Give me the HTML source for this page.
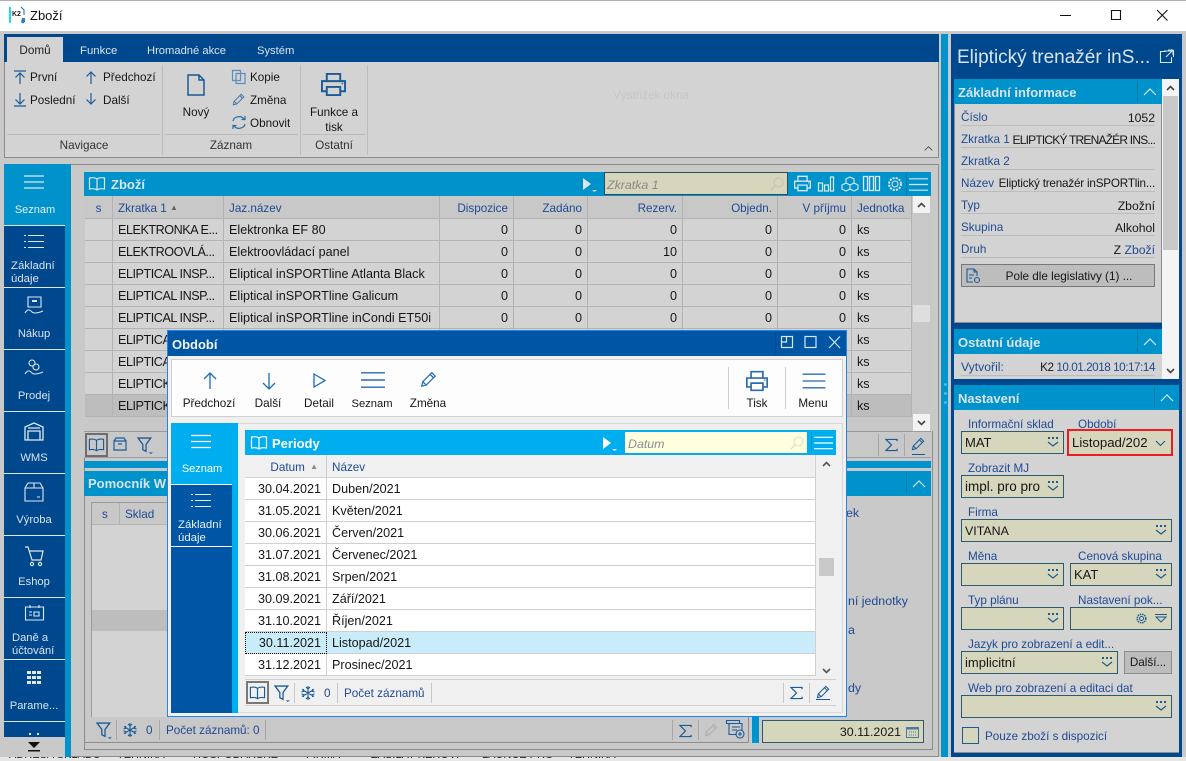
<!DOCTYPE html>
<html><head><meta charset="utf-8"><title>Zboží</title>
<style>
html,body{margin:0;padding:0}
body{width:1186px;height:761px;overflow:hidden;position:relative;background:#c9c9c9;font:11.7px/16px "Liberation Sans",sans-serif;color:#161616}
.a{position:absolute;box-sizing:border-box}
.t{position:absolute;white-space:nowrap;line-height:16px;margin-top:1px}
.m0{margin-top:0}
.c{transform:translateX(-50%)}
.r{transform:translateX(-100%)}
.l{color:#1f4a94}
.s{color:#d9e3ec}
.v{font-size:12.2px}
.b{font-weight:bold;font-size:13px;margin-top:0}
svg{position:absolute;overflow:visible;fill:none}
table{position:absolute;border-collapse:separate;border-spacing:0;table-layout:fixed}
td,th{box-sizing:border-box;height:22px;font-weight:normal;text-align:left;white-space:nowrap;overflow:hidden;border-right:1px solid #b3b3b3;border-bottom:1px solid #b3b3b3}
td{font-size:12.6px;padding:1px 5px 0;line-height:20px}
th{font-size:11.7px;padding:3px 5px 0;line-height:18px}
.n{text-align:right}
.k{letter-spacing:-.45px}
#g th{color:#1f4a94;background:#c8c8c8}
#g td{background:#d3d3d3}
#g tr.sel td{background:#bdbdbd}
#p td,#p th{border-color:#d0d0d0}
#p th{color:#1f4a94;background:#f0f0f0}
#p td{background:#fff}
#p tr.sel td{background:#c9ecfa}
.f{position:absolute;box-sizing:border-box;height:23px;background:#d6d6bc;border:1px solid #2c5a6e;padding-left:3px;line-height:22px;white-space:nowrap;overflow:hidden;font-size:13px}
.u{position:absolute;height:1px;background:#bcbcbc;left:961px;width:194px}
</style></head><body>
<svg width="0" height="0" style="position:absolute">
<defs>
<symbol id="menu" viewBox="0 0 20 14"><path d="M0 1h20M0 7h20M0 13h20" stroke="currentColor" stroke-width="1.2"/></symbol>
<symbol id="book" viewBox="0 0 18 16"><path d="M9 3C7 1.500 4 1.500 1.500 2v11C4 12.500 7 12.500 9 14c2-1.500 5-1.500 7.500-1V2C14 1.500 11 1.500 9 3zM9 3v11" stroke="currentColor" stroke-width="1.200"/></symbol>
<symbol id="filter" viewBox="0 0 16 16"><path d="M1 1h12L8.500 7v6.500l-3-1.500V7z" stroke="currentColor" stroke-width="1.200"/><path d="M11 14.500h4l-2 1.500z" fill="currentColor"/></symbol>
<symbol id="snow" viewBox="0 0 16 16"><path d="M8 1v14M2 4.500l12 7M14 4.500l-12 7M6 2l2 2 2-2M6 14l2-2 2 2M1.500 7l2.500-.7-.7-2.300M14.500 9l-2.500.7.7 2.300M14.500 7L12 6.300l.7-2.300M1.500 9L4 9.700l-.7 2.300" stroke="currentColor" stroke-width="1.100"/></symbol>
<symbol id="sigma" viewBox="0 0 14 14"><path d="M13 3V1H1l6 6-6 6h12v-2" stroke="currentColor" stroke-width="1.300"/></symbol>
<symbol id="pen" viewBox="0 0 16 16"><path d="M1.500 13.500l1-4L10.500 1.500l3 3-8 8zM9 3l3 3M2.500 9.500l3 3" stroke="currentColor" stroke-width="1.100"/></symbol>
<symbol id="print" viewBox="0 0 28 26"><path d="M7 9V2h14v7M7 20H2V9.500h24V20h-5M7 15.500h14V24H7z" stroke="currentColor" stroke-width="2"/><path d="M22.500 12h1.500" stroke="currentColor" stroke-width="1.500"/></symbol>
<symbol id="dd" viewBox="0 0 12 10"><path d="M1 5l5 4 5-4" stroke="#1c5a96" stroke-width="1.200"/><path d="M1 0h2v2H1zM5 0h2v2H5zM9 0h2v2H9z" fill="#1c5a96"/></symbol>
<symbol id="chev" viewBox="0 0 14 8"><path d="M1 7l6-6 6 6" stroke="currentColor" stroke-width="1.200"/></symbol>
<symbol id="play" viewBox="0 0 14 14"><path d="M0 0l8 6-8 6z" fill="currentColor"/><path d="M9 12h5l-2.500 2z" fill="currentColor"/></symbol>
<symbol id="mag" viewBox="0 0 14 14"><circle cx="8.500" cy="5.500" r="4.500" stroke="currentColor"/><path d="M5 9l-4 4" stroke="currentColor" stroke-width="1.300"/></symbol>
</defs></svg>

<!-- title bar -->
<div class="a" style="left:0;top:0;width:1186px;height:31px;background:#fff;border-top:1px solid #b0b0b0"></div>
<svg style="left:9px;top:7px" width="17" height="17"><path d="M1 0v16" stroke="#19e0f0" stroke-width="2"/><path d="M12 0l3 3v5" stroke="#2a7fc0" stroke-width="1.200"/><path d="M13 11h3v4l-2 1.500-2-1z" fill="#2a7fc0"/></svg>
<div class="t m0" style="left:12px;top:7px;font:bold 7px/16px 'Liberation Sans',sans-serif;color:#222">K2</div>
<div class="t m0" style="left:30px;top:8px;font-size:13px;color:#111">Zboží</div>
<svg style="left:1060px;top:9px" width="120" height="14"><path d="M0 6.500h11M51.500 1.500h9v9h-9zM97 1l10.500 10.500M107.500 1L97 11.500" stroke="#111" stroke-width="1.100"/></svg>

<!-- ribbon -->
<div class="a" style="left:4px;top:34px;width:935px;height:28px;background:#00488d"></div>
<div class="a" style="left:7px;top:37px;width:56px;height:25px;background:#d3d3d3"></div>
<div class="a" style="left:4px;top:62px;width:935px;height:96px;background:#d3d3d3;border:1px solid #8c8c8c;border-top:0"></div>
<div class="t c" style="left:35px;top:42px;color:#222">Domů</div>
<div class="t s" style="left:80px;top:42px;font-size:11.4px">Funkce</div>
<div class="t s" style="left:147px;top:42px;font-size:11.2px">Hromadné akce</div>
<div class="t s" style="left:257px;top:42px;font-size:11.2px">Systém</div>
<div class="a" style="left:162px;top:65px;width:1px;height:90px;background:#bcbcbc"></div>
<div class="a" style="left:300px;top:65px;width:1px;height:90px;background:#bcbcbc"></div>
<div class="a" style="left:367px;top:65px;width:1px;height:90px;background:#bcbcbc"></div>
<div class="a" style="left:7px;top:134px;width:153px;height:1px;background:#bcbcbc"></div>
<div class="a" style="left:165px;top:134px;width:133px;height:1px;background:#bcbcbc"></div>
<div class="a" style="left:303px;top:134px;width:62px;height:1px;background:#bcbcbc"></div>
<svg style="left:13px;top:70px" width="90" height="38" stroke="#1c5a96" stroke-width="1.200"><path d="M1 1h12M7 3v11M2.500 7.500L7 3l4.500 4.500"/><path d="M1 36h12M7 23v11M2.500 29.500L7 34l4.500-4.500"/><path d="M78 2v12M73.500 6.500L78 2l4.500 4.500"/><path d="M78 23v11M73.500 29.500L78 34l4.500-4.500"/></svg>
<div class="t" style="left:30px;top:69px">První</div>
<div class="t" style="left:30px;top:92px">Poslední</div>
<div class="t" style="left:103px;top:69px">Předchozí</div>
<div class="t" style="left:103px;top:92px">Další</div>
<svg style="left:187px;top:74px" width="18" height="22" stroke="#1c5a96" stroke-width="1.500"><path d="M1 1h11l5 5v15H1zM12 1v5h5"/></svg>
<div class="t c" style="left:196px;top:104px">Nový</div>
<svg style="left:232px;top:70px" width="14" height="14" stroke="#5f8db8" stroke-width="1.200"><path d="M.5.500h8v10h-8zM4 3.500h9v10H4z"/></svg>
<svg style="left:232px;top:93px;color:#3a72a8" width="14" height="14"><use href="#pen" width="14" height="14"/></svg>
<svg style="left:232px;top:115px" width="14" height="15" stroke="#2f6aa2" stroke-width="1.200"><path d="M1 6a6 5 0 0 1 11-2M13 1v3.500H9.500M13 9a6 5 0 0 1-11 2M1 14v-3.500h3.500"/></svg>
<div class="t" style="left:250px;top:69px">Kopie</div>
<div class="t" style="left:250px;top:92px">Změna</div>
<div class="t" style="left:250px;top:115px">Obnovit</div>
<svg style="left:320px;top:72px;color:#1c5a96" width="27" height="25"><use href="#print" width="27" height="25"/></svg>
<div class="t c" style="left:334px;top:104px">Funkce a</div>
<div class="t c" style="left:334px;top:119px">tisk</div>
<div class="t c" style="left:84px;top:137px;color:#333">Navigace</div>
<div class="t c" style="left:231px;top:137px;color:#333">Záznam</div>
<div class="t c" style="left:334px;top:137px;color:#333">Ostatní</div>
<div class="t" style="left:613px;top:87px;color:#c5c6c8">Výstřižek okna</div>
<svg style="left:924px;top:146px;color:#333" width="9" height="5"><use href="#chev" width="9" height="5"/></svg>

<!-- sidebar -->
<div class="a" style="left:4px;top:164px;width:61px;height:573px;background:#00488d"></div>
<div class="a" style="left:65px;top:164px;width:6px;height:593px;background:#0093cb"></div>
<div class="a" style="left:4px;top:164px;width:61px;height:61px;background:#0093cb"></div>
<div class="a" style="left:4px;top:737px;width:61px;height:20px;background:#c9c9c9"></div>
<div class="a" style="left:4px;top:225px;width:61px;height:1px;background:#dfe6ee"></div>
<div class="a" style="left:4px;top:287px;width:61px;height:1px;background:#dfe6ee"></div>
<div class="a" style="left:4px;top:349px;width:61px;height:1px;background:#dfe6ee"></div>
<div class="a" style="left:4px;top:411px;width:61px;height:1px;background:#dfe6ee"></div>
<div class="a" style="left:4px;top:473px;width:61px;height:1px;background:#dfe6ee"></div>
<div class="a" style="left:4px;top:535px;width:61px;height:1px;background:#dfe6ee"></div>
<div class="a" style="left:4px;top:597px;width:61px;height:1px;background:#dfe6ee"></div>
<div class="a" style="left:4px;top:659px;width:61px;height:1px;background:#dfe6ee"></div>
<div class="a" style="left:4px;top:721px;width:61px;height:1px;background:#dfe6ee"></div>
<svg style="left:24px;top:173px;color:#dfe8ef" width="20" height="18"><use href="#menu" width="20" height="18" preserveAspectRatio="none"/></svg>
<svg style="left:24px;top:234px" width="20" height="14" stroke="#dfe8ef"><path d="M4 1.500h16M4 7.500h16M4 13.500h16M0 1.500h2M0 7.500h2M0 13.500h2"/></svg>
<svg style="left:25px;top:296px" width="20" height="20" stroke="#dfe8ef" stroke-width="1.100"><path d="M3 1h13v10H3z"/><path d="M7 5h5" stroke-width="2"/><path d="M0 17c3-5 5-3 7-1s6 1 11-1"/></svg>
<svg style="left:25px;top:359px" width="20" height="20" stroke="#dfe8ef" stroke-width="1.100"><circle cx="7" cy="4" r="3"/><circle cx="11" cy="8" r="3"/><path d="M0 15c3-5 5-3 7-1s6 1 11-1"/></svg>
<svg style="left:24px;top:422px" width="20" height="19" stroke="#dfe8ef" stroke-width="1.300"><path d="M1 18V5l9-4 9 4v13zM4 9h12v9H4zM4 6h12"/></svg>
<svg style="left:24px;top:482px" width="20" height="20" stroke="#dfe8ef" stroke-width="1.100"><path d="M1 6l3-5h12l3 5v13H1zM1 6h18M10 1v5M13 15h3"/></svg>
<svg style="left:25px;top:546px" width="20" height="22" stroke="#dfe8ef" stroke-width="1.200"><path d="M0 1h3l4 13h9l2-9H4"/><circle cx="7" cy="18" r="1.600"/><circle cx="15" cy="18" r="1.600"/></svg>
<svg style="left:25px;top:604px" width="19" height="18" stroke="#dfe8ef" stroke-width="1.100"><path d="M.5 3h18v13H.5zM5 1v3M14 1v3M4 8h3M4 11h3M9 8h5v4H9z"/></svg>
<svg style="left:27px;top:671px;fill:#dfe8ef" width="15" height="15"><path d="M0 0h4v3H0zM5 0h4v3H5zM10 0h4v3h-4zM0 5h4v3H0zM5 5h4v3H5zM10 5h4v3h-4zM0 10h4v3H0zM5 10h4v3H5zM10 10h4v3h-4z"/></svg>
<svg style="left:27px;top:733px;fill:#dfe8ef" width="15" height="4"><path d="M2 0h2v2H2zM10 0h2v2h-2z"/></svg>
<svg style="left:28px;top:742px;fill:#111" width="12" height="10"><path d="M0 0h12L6 6zM0 8h12v1.500H0z"/></svg>
<div class="t c s" style="left:35px;top:201px;color:#e4eef5;font-size:11px">Seznam</div>
<div class="t s" style="left:11px;top:257px;font-size:11.4px">Základní</div>
<div class="t s" style="left:11px;top:270px;font-size:11.4px">údaje</div>
<div class="t c s" style="left:34px;top:325px;font-size:11.2px">Nákup</div>
<div class="t c s" style="left:34px;top:387px;font-size:11.2px">Prodej</div>
<div class="t c s" style="left:34px;top:449px;font-size:11.2px">WMS</div>
<div class="t c s" style="left:34px;top:511px;font-size:11.2px">Výroba</div>
<div class="t c s" style="left:34px;top:573px;font-size:11.2px">Eshop</div>
<div class="t s" style="left:12px;top:629px;font-size:11.2px">Daně a</div>
<div class="t s" style="left:12px;top:642px;font-size:11.2px">účtování</div>
<div class="t c s" style="left:34px;top:697px;font-size:11.2px">Parame...</div>

<!-- content frame -->
<div class="a" style="left:71px;top:164px;width:868px;height:593px;border:1px solid #8c8c8c;border-left:0"></div>
<div class="a" style="left:84px;top:743px;width:848px;height:7px;border-bottom:1px solid #8c8c8c"></div>
<div class="a" style="left:84px;top:431px;width:1px;height:318px;background:#8c8c8c"></div>
<div class="a" style="left:932px;top:431px;width:1px;height:319px;background:#8c8c8c"></div>

<!-- Zboží grid -->
<div class="a" style="left:84px;top:172px;width:847px;height:24px;background:#0093cb"></div>
<svg style="left:88px;top:176px;color:#dbe6ee" width="18" height="17"><use href="#book" width="18" height="16"/></svg>
<div class="t b s" style="left:111px;top:177px">Zboží</div>
<svg style="left:583px;top:178px;color:#dbe6ee" width="14" height="14"><use href="#play" width="14" height="14"/></svg>
<div class="a" style="left:604px;top:172px;width:184px;height:23px;background:#d6d6bc;border:1px solid #2f4b57"></div>
<div class="t m0" style="left:607px;top:177px;font-style:italic;color:#888;font-size:12.4px">Zkratka 1</div>
<svg style="left:770px;top:177px;color:#c4c4ac" width="14" height="14"><use href="#mag" width="14" height="14"/></svg>
<svg style="left:793px;top:175px;color:#dbe6ee" width="19" height="17"><use href="#print" width="19" height="17"/></svg>
<svg style="left:818px;top:176px" width="17" height="17" stroke="#dbe6ee" stroke-width="1.200"><path d="M.5 7h4v8h-4zM6.500 9h4v6h-4zM12.500 1h3v14h-3z"/></svg>
<svg style="left:841px;top:176px" width="18" height="17" stroke="#dbe6ee" stroke-width="1.100"><path d="M9 1l4 2v4l-4 2-4-2V3zM5 7l4 2v4l-4 2-4-2V9zM13 7l4 2v4l-4 2-4-2V9z"/></svg>
<svg style="left:863px;top:176px" width="18" height="17" stroke="#dbe6ee" stroke-width="1.300"><path d="M.5.500h4v14h-4zM6.500.500h4v14h-4zM12.500.500h4v14h-4z"/></svg>
<svg style="left:887px;top:176px" width="16" height="16" stroke="#dbe6ee"><circle cx="8" cy="8" r="3"/><circle cx="8" cy="8" r="6" stroke-width="2" stroke-dasharray="2 1.200"/></svg>
<div class="a" style="left:906px;top:173px;width:1px;height:22px;background:#0a7aa8"></div>
<svg style="left:909px;top:177px;color:#dbe6ee" width="19" height="15"><use href="#menu" width="19" height="15" preserveAspectRatio="none"/></svg>
<div class="a" style="left:84px;top:196px;width:847px;height:235px;background:#c8c8c8"></div>
<table id="g" style="left:85px;top:196px;width:827px">
<colgroup><col style="width:28px"><col style="width:111px"><col style="width:216px"><col style="width:74px"><col style="width:74px"><col style="width:95px"><col style="width:95px"><col style="width:74px"><col style="width:60px"></colgroup>
<tr><th style="text-align:center;padding:3px 0 0">s</th><th>Zkratka 1 <span style="font-size:8px;color:#666;vertical-align:2px">▲</span></th><th>Jaz.název</th><th class="n">Dispozice</th><th class="n">Zadáno</th><th class="n">Rezerv.</th><th class="n">Objedn.</th><th class="n">V příjmu</th><th>Jednotka</th></tr>
<tr><td></td><td class="k">ELEKTRONKA E...</td><td>Elektronka EF 80</td><td class="n">0</td><td class="n">0</td><td class="n">0</td><td class="n">0</td><td class="n">0</td><td>ks</td></tr>
<tr><td></td><td class="k">ELEKTROOVLÁ...</td><td>Elektroovládací panel</td><td class="n">0</td><td class="n">0</td><td class="n">10</td><td class="n">0</td><td class="n">0</td><td>ks</td></tr>
<tr><td></td><td class="k">ELIPTICAL INSP...</td><td>Eliptical inSPORTline Atlanta Black</td><td class="n">0</td><td class="n">0</td><td class="n">0</td><td class="n">0</td><td class="n">0</td><td>ks</td></tr>
<tr><td></td><td class="k">ELIPTICAL INSP...</td><td>Eliptical inSPORTline Galicum</td><td class="n">0</td><td class="n">0</td><td class="n">0</td><td class="n">0</td><td class="n">0</td><td>ks</td></tr>
<tr><td></td><td class="k">ELIPTICAL INSP...</td><td>Eliptical inSPORTline inCondi ET50i</td><td class="n">0</td><td class="n">0</td><td class="n">0</td><td class="n">0</td><td class="n">0</td><td>ks</td></tr>
<tr><td></td><td class="k">ELIPTICAL INSP...</td><td></td><td></td><td></td><td></td><td></td><td></td><td>ks</td></tr>
<tr><td></td><td class="k">ELIPTICAL INSP...</td><td></td><td></td><td></td><td></td><td></td><td></td><td>ks</td></tr>
<tr><td></td><td class="k">ELIPTICKÝ TRE...</td><td></td><td></td><td></td><td></td><td></td><td></td><td>ks</td></tr>
<tr class="sel"><td></td><td class="k">ELIPTICKÝ TRE...</td><td></td><td></td><td></td><td></td><td></td><td></td><td>ks</td></tr>
</table>
<div class="a" style="left:913px;top:196px;width:17px;height:17px;background:#f2f2f2"></div>
<div class="a" style="left:913px;top:305px;width:17px;height:17px;background:#dedede"></div>
<div class="a" style="left:913px;top:414px;width:17px;height:17px;background:#f2f2f2"></div>
<svg style="left:917px;top:202px" width="9" height="6" stroke="#444" stroke-width="1.600"><path d="M1 5l3.500-3.500L8 5"/></svg>
<svg style="left:917px;top:420px" width="9" height="6" stroke="#444" stroke-width="1.600"><path d="M1 1l3.500 3.500L8 1"/></svg>

<!-- grid toolbar -->
<div class="a" style="left:84px;top:431px;width:847px;height:27px;background:#c8c8c8;border-top:1px solid #9a9a9a;border-bottom:1px solid #9a9a9a"></div>
<div class="a" style="left:85px;top:433px;width:23px;height:24px;border:2px solid #6e6e6e"></div>
<svg style="left:88px;top:437px;color:#1c5a96" width="17" height="16"><use href="#book" width="17" height="16"/></svg>
<svg style="left:113px;top:437px" width="15" height="15" stroke="#1c5a96" stroke-width="1.200"><path d="M1 4h12v9H1zM1 4l2-3h8l2 3M5 7h4"/></svg>
<svg style="left:137px;top:437px;color:#1c5a96" width="17" height="17"><use href="#filter" width="17" height="17"/></svg>
<div class="a" style="left:878px;top:434px;width:1px;height:22px;background:#a8a8a8"></div>
<div class="a" style="left:904px;top:434px;width:1px;height:22px;background:#a8a8a8"></div>
<svg style="left:885px;top:438px;color:#1c5a96" width="13" height="14"><use href="#sigma" width="13" height="14"/></svg>
<svg style="left:911px;top:437px;color:#1c5a96" width="15" height="15"><use href="#pen" width="15" height="15"/></svg>
<div class="a" style="left:912px;top:454px;width:13px;height:1px;background:#1c5a96"></div>

<!-- Pomocník -->
<div class="a" style="left:84px;top:461px;width:847px;height:7px;background:#0093cb"></div>
<div class="a" style="left:84px;top:471px;width:847px;height:25px;background:#0093cb"></div>
<div class="t b s" style="left:88px;top:476px">Pomocník W</div>
<div class="a" style="left:906px;top:473px;width:1px;height:21px;background:#0a7aa8"></div>
<svg style="left:912px;top:480px;color:#dbe6ee" width="14" height="8"><use href="#chev" width="14" height="8"/></svg>
<div class="a" style="left:91px;top:502px;width:80px;height:215px;background:#d3d3d3;border:1px solid #9a9a9a;border-bottom:0;border-right:0"></div>
<div class="a" style="left:92px;top:503px;width:80px;height:22px;background:#c8c8c8;border-bottom:1px solid #b3b3b3"></div>
<div class="a" style="left:119px;top:503px;width:1px;height:22px;background:#b3b3b3"></div>
<div class="t l" style="left:102px;top:506px">s</div>
<div class="t l" style="left:125px;top:506px">Sklad</div>
<div class="a" style="left:92px;top:610px;width:80px;height:21px;background:#bdbdbd"></div>
<div class="t l m0" style="left:846px;top:505px;font-size:12.4px">ek</div>
<div class="t l m0" style="left:848px;top:593px;font-size:12.4px">ní jednotky</div>
<div class="t l m0" style="left:848px;top:622px;font-size:12.4px">a</div>
<div class="t l m0" style="left:848px;top:680px;font-size:12.4px">dy</div>

<!-- bottom status -->
<div class="a" style="left:85px;top:717px;width:664px;height:26px;background:#c8c8c8;border-bottom:1px solid #8c8c8c;border-right:1px solid #8c8c8c"></div>
<svg style="left:96px;top:722px;color:#1c5a96" width="17" height="17"><use href="#filter" width="17" height="17"/></svg>
<div class="a" style="left:116px;top:720px;width:1px;height:20px;background:#a8a8a8"></div>
<svg style="left:122px;top:722px;color:#1c5a96" width="16" height="16"><use href="#snow" width="16" height="16"/></svg>
<div class="t l" style="left:146px;top:722px">0</div>
<div class="a" style="left:159px;top:720px;width:1px;height:20px;background:#a8a8a8"></div>
<div class="t l" style="left:166px;top:722px">Počet záznamů: 0</div>
<div class="a" style="left:265px;top:720px;width:1px;height:20px;background:#a8a8a8"></div>
<div class="a" style="left:672px;top:720px;width:1px;height:20px;background:#a8a8a8"></div>
<div class="a" style="left:698px;top:720px;width:1px;height:20px;background:#a8a8a8"></div>
<svg style="left:679px;top:724px;color:#1c5a96" width="13" height="14"><use href="#sigma" width="13" height="14"/></svg>
<svg style="left:704px;top:723px;color:#b0b0b0" width="15" height="15"><use href="#pen" width="15" height="15"/></svg>
<svg style="left:726px;top:720px" width="20" height="19" stroke="#1c5a96" stroke-width="1.100"><path d="M.5.500h13v3h-13zM3 3.500h13v11H3zM6 7h8M6 10h5"/><circle cx="14" cy="14" r="4" fill="#c8c8c8"/><path d="M12 14h4M14 12v4"/></svg>
<div class="a" style="left:752px;top:717px;width:7px;height:26px;background:#0093cb"></div>
<div class="a" style="left:762px;top:720px;width:162px;height:23px;background:#d6d6bc;border:1px solid #2c5a6e"></div>
<div class="t r m0" style="left:901px;top:724px;font-size:12.4px">30.11.2021</div>
<svg style="left:906px;top:725px" width="13" height="13" stroke="#4a7aa5"><path d="M.5 2.500h12v10H.5z"/><path d="M.5 3.500h12" stroke-width="2"/><path d="M3 7h7M3 10h7" stroke-dasharray="1 1"/></svg>

<!-- bottom clipped text -->
<div class="a" style="left:0;top:757px;width:1186px;height:4px;background:#e6e6e6;overflow:hidden"><div class="t m0" style="left:9px;top:-10px;font-size:11px;color:#222">ADRESA SKLADU</div><div class="t m0" style="left:117px;top:-10px;font-size:11px;color:#222">TEHNIKA</div><div class="t m0" style="left:193px;top:-10px;font-size:11px;color:#222">HOSPODÁŘSKÉ</div><div class="t m0" style="left:306px;top:-10px;font-size:11px;color:#222">FIRMA</div><div class="t m0" style="left:371px;top:-10px;font-size:11px;color:#222">ZASILAT KEROVI</div><div class="t m0" style="left:482px;top:-10px;font-size:11px;color:#222">LAUNCE PRO</div><div class="t m0" style="left:568px;top:-10px;font-size:11px;color:#222">TEHNIKA</div></div>

<!-- dialog -->
<div class="a" style="left:167px;top:330px;width:680px;height:387px;background:#f0f0f0;border:1px solid #1a86f0"></div>
<div class="a" style="left:168px;top:331px;width:678px;height:25px;background:#0055a5"></div>
<div class="t b" style="left:172px;top:337px;color:#f2f6fa">Období</div>
<div class="a" style="left:775px;top:333px;width:1px;height:21px;background:#004a90"></div>
<svg style="left:781px;top:336px" width="60" height="14" stroke="#d8e6f2" stroke-width="1.200"><path d="M.5.500h11v11H.5zM5.500.500v5.500H.5"/><path d="M24 .500h11v11H24zM48 .500L59 12M59 .500L48 12"/></svg>
<div class="a" style="left:171px;top:359px;width:672px;height:58px;background:#fdfdfd;border:1px solid #d0d0d0"></div>
<svg style="left:203px;top:372px" width="14" height="18" stroke="#1c6cb8" stroke-width="1.300"><path d="M7 1v16M1 7l6-6 6 6"/></svg>
<svg style="left:262px;top:372px" width="14" height="18" stroke="#1c6cb8" stroke-width="1.300"><path d="M7 1v16M1 11l6 6 6-6"/></svg>
<svg style="left:313px;top:373px" width="13" height="15" stroke="#1c6cb8" stroke-width="1.300"><path d="M1 1l11 6.500L1 14z"/></svg>
<svg style="left:361px;top:371px;color:#2a6cb0" width="24" height="18"><use href="#menu" width="24" height="18" preserveAspectRatio="none"/></svg>
<svg style="left:420px;top:371px;color:#2a6cb0" width="18" height="18"><use href="#pen" width="18" height="18"/></svg>
<div class="t c" style="left:209px;top:395px">Předchozí</div>
<div class="t c" style="left:268px;top:395px">Další</div>
<div class="t c" style="left:319px;top:395px">Detail</div>
<div class="t c" style="left:372px;top:395px;font-size:11.2px">Seznam</div>
<div class="t c" style="left:428px;top:395px">Změna</div>
<div class="a" style="left:728px;top:367px;width:1px;height:42px;background:#d0d0d0"></div>
<div class="a" style="left:785px;top:367px;width:1px;height:42px;background:#d0d0d0"></div>
<svg style="left:745px;top:370px;color:#2a6cb0" width="24" height="22"><use href="#print" width="24" height="22"/></svg>
<svg style="left:802px;top:373px;color:#2a6cb0" width="24" height="16"><use href="#menu" width="24" height="16" preserveAspectRatio="none"/></svg>
<div class="t c" style="left:757px;top:395px">Tisk</div>
<div class="t c" style="left:813px;top:395px">Menu</div>

<div class="a" style="left:171px;top:423px;width:67px;height:290px;background:#00aeef"></div>
<div class="a" style="left:171px;top:485px;width:61px;height:228px;background:#0055a5"></div>
<div class="a" style="left:171px;top:484px;width:61px;height:1px;background:#fff"></div>
<div class="a" style="left:171px;top:546px;width:61px;height:1px;background:#fff"></div>
<svg style="left:191px;top:433px;color:#fff" width="20" height="17"><use href="#menu" width="20" height="17" preserveAspectRatio="none"/></svg>
<svg style="left:191px;top:493px" width="20" height="14" stroke="#e8f0f6"><path d="M4 1.500h16M4 7.500h16M4 13.500h16M0 1.500h2M0 7.500h2M0 13.500h2"/></svg>
<div class="t c" style="left:202px;top:460px;color:#fff;font-size:11px">Seznam</div>
<div class="t" style="left:178px;top:516px;color:#e8f0f6;font-size:11.4px">Základní</div>
<div class="t" style="left:178px;top:529px;color:#e8f0f6;font-size:11.4px">údaje</div>

<div class="a" style="left:238px;top:423px;width:605px;height:290px;background:#f0f0f0;border:1px solid #d8d8d8;border-left:0"></div>
<div class="a" style="left:245px;top:430px;width:591px;height:25px;background:#00aeef"></div>
<svg style="left:250px;top:435px;color:#fff" width="18" height="17"><use href="#book" width="18" height="16"/></svg>
<div class="t b" style="left:272px;top:436px;color:#fff">Periody</div>
<svg style="left:603px;top:437px;color:#fff" width="14" height="14"><use href="#play" width="14" height="14"/></svg>
<div class="a" style="left:625px;top:432px;width:182px;height:21px;background:#ffffe0"></div>
<div class="t m0" style="left:628px;top:436px;font-style:italic;color:#8c8c8c;font-size:12.4px">Datum</div>
<svg style="left:790px;top:436px;color:#ddddc8" width="14" height="14"><use href="#mag" width="14" height="14"/></svg>
<div class="a" style="left:811px;top:432px;width:1px;height:21px;background:#0090cc"></div>
<svg style="left:814px;top:436px;color:#fff" width="19" height="14"><use href="#menu" width="19" height="14" preserveAspectRatio="none"/></svg>

<table id="p" style="left:245px;top:455px;width:571px">
<colgroup><col style="width:82px"><col style="width:489px"></colgroup>
<tr><th class="n" style="padding-right:8px">Datum <span style="font-size:8px;color:#888;vertical-align:2px;margin-left:2px">▲</span></th><th>Název</th></tr>
<tr><td class="n">30.04.2021</td><td>Duben/2021</td></tr>
<tr><td class="n">31.05.2021</td><td>Květen/2021</td></tr>
<tr><td class="n">30.06.2021</td><td>Červen/2021</td></tr>
<tr><td class="n">31.07.2021</td><td>Červenec/2021</td></tr>
<tr><td class="n">31.08.2021</td><td>Srpen/2021</td></tr>
<tr><td class="n">30.09.2021</td><td>Září/2021</td></tr>
<tr><td class="n">31.10.2021</td><td>Říjen/2021</td></tr>
<tr class="sel"><td class="n" style="outline:1px dotted #111;outline-offset:-1px">30.11.2021</td><td>Listopad/2021</td></tr>
<tr><td class="n">31.12.2021</td><td>Prosinec/2021</td></tr>
</table>
<div class="a" style="left:819px;top:558px;width:15px;height:18px;background:#c8c8c8"></div>
<svg style="left:822px;top:461px" width="9" height="6" stroke="#555" stroke-width="1.600"><path d="M1 5l3.500-3.500L8 5"/></svg>
<svg style="left:822px;top:668px" width="9" height="6" stroke="#555" stroke-width="1.600"><path d="M1 1l3.500 3.500L8 1"/></svg>
<div class="a" style="left:245px;top:679px;width:591px;height:27px;background:#f0f0f0;border-top:1px solid #cfcfcf;border-bottom:1px solid #cfcfcf"></div>
<div class="a" style="left:246px;top:681px;width:23px;height:23px;border:2px solid #787878"></div>
<svg style="left:249px;top:685px;color:#1c5a96" width="17" height="16"><use href="#book" width="17" height="16"/></svg>
<svg style="left:274px;top:685px;color:#1c5a96" width="17" height="17"><use href="#filter" width="17" height="17"/></svg>
<div class="a" style="left:294px;top:683px;width:1px;height:20px;background:#c8c8c8"></div>
<svg style="left:300px;top:685px;color:#1c5a96" width="16" height="16"><use href="#snow" width="16" height="16"/></svg>
<div class="t l" style="left:324px;top:685px">0</div>
<div class="a" style="left:337px;top:683px;width:1px;height:20px;background:#c8c8c8"></div>
<div class="t l" style="left:344px;top:685px">Počet záznamů</div>
<div class="a" style="left:431px;top:683px;width:1px;height:20px;background:#c8c8c8"></div>
<div class="a" style="left:783px;top:683px;width:1px;height:20px;background:#c8c8c8"></div>
<div class="a" style="left:809px;top:683px;width:1px;height:20px;background:#c8c8c8"></div>
<svg style="left:790px;top:686px;color:#1c5a96" width="13" height="14"><use href="#sigma" width="13" height="14"/></svg>
<svg style="left:816px;top:685px;color:#1c5a96" width="15" height="15"><use href="#pen" width="15" height="15"/></svg>
<div class="a" style="left:816px;top:699px;width:14px;height:1px;background:#1c5a96"></div>

<!-- right strip -->
<div class="a" style="left:941px;top:34px;width:7px;height:723px;background:#0093cb"></div>
<div class="a" style="left:944px;top:383px;width:3px;height:3px;background:#38c0f0;border-radius:2px"></div>
<div class="a" style="left:944px;top:392px;width:3px;height:3px;background:#38c0f0;border-radius:2px"></div>
<div class="a" style="left:944px;top:401px;width:3px;height:3px;background:#38c0f0;border-radius:2px"></div>

<!-- right panel -->
<div class="a" style="left:951px;top:34px;width:231px;height:723px;background:#00488d"></div>
<div class="t m0" style="left:957px;top:48px;font-size:19px;line-height:20px;color:#d9e3ec">Eliptický trenažér inS...</div>
<svg style="left:1160px;top:49px" width="14" height="14" stroke="#d9e3ec" stroke-width="1.100"><path d="M6 2.500H.5v11h11V8M4 2h9.500v6M13 1L6 8M8 1h5v5"/></svg>
<div class="a" style="left:1162px;top:79px;width:17px;height:300px;background:#f4f4f4"></div>
<div class="a" style="left:1163px;top:96px;width:15px;height:154px;background:#c8c8c8"></div>
<svg style="left:1166px;top:85px" width="9" height="6" stroke="#444" stroke-width="1.600"><path d="M1 5l3.500-3.500L8 5"/></svg>
<svg style="left:1166px;top:368px" width="9" height="6" stroke="#444" stroke-width="1.600"><path d="M1 1l3.500 3.500L8 1"/></svg>

<div class="a" style="left:954px;top:79px;width:208px;height:25px;background:#0093cb"></div>
<div class="t b s" style="left:958px;top:85px">Základní informace</div>
<div class="a" style="left:1137px;top:81px;width:1px;height:21px;background:#0a7aa8"></div>
<svg style="left:1143px;top:88px;color:#dbe6ee" width="14" height="8"><use href="#chev" width="14" height="8"/></svg>
<div class="a" style="left:954px;top:104px;width:208px;height:219px;background:#d3d3d3;border:1px solid #8c8c8c;border-top:0"></div>
<div class="t l" style="left:961px;top:109px">Číslo</div><div class="t r v" style="left:1155px;top:109px">1052</div>
<div class="u" style="top:125px"></div>
<div class="t l" style="left:961px;top:131px">Zkratka 1</div><div class="t r" style="left:1155px;top:131px;font-size:12px;letter-spacing:-.8px">ELIPTICKÝ TRENAŽÉR INS...</div>
<div class="u" style="top:147px"></div>
<div class="t l" style="left:961px;top:153px">Zkratka 2</div>
<div class="u" style="top:169px"></div>
<div class="t l" style="left:961px;top:175px">Název</div><div class="t r" style="left:1155px;top:175px;letter-spacing:-.2px">Eliptický trenažér inSPORTlin...</div>
<div class="u" style="top:191px"></div>
<div class="t l" style="left:961px;top:197px">Typ</div><div class="t r v" style="left:1155px;top:197px">Zbožní</div>
<div class="u" style="top:213px"></div>
<div class="t l" style="left:961px;top:219px">Skupina</div><div class="t r v" style="left:1155px;top:219px">Alkohol</div>
<div class="u" style="top:235px"></div>
<div class="t l" style="left:961px;top:241px">Druh</div><div class="t r v" style="left:1155px;top:241px">Z <span class="l">Zboží</span></div>
<div class="u" style="top:257px"></div>
<div class="a" style="left:961px;top:264px;width:194px;height:23px;background:#bdbdbd;border:1px solid #777"></div>
<svg style="left:966px;top:268px" width="15" height="16" stroke="#1c5a96" stroke-width="1.100"><path d="M11 8V4L8 1H1v13h6M8 1v3h3M3 7h5M3 10h3"/><circle cx="11" cy="12" r="2.500"/></svg>
<div class="t c" style="left:1069px;top:268px">Pole dle legislativy (1) ...</div>

<div class="a" style="left:954px;top:329px;width:208px;height:25px;background:#0093cb"></div>
<div class="t b s" style="left:958px;top:335px">Ostatní údaje</div>
<div class="a" style="left:1137px;top:331px;width:1px;height:21px;background:#0a7aa8"></div>
<svg style="left:1143px;top:338px;color:#dbe6ee" width="14" height="8"><use href="#chev" width="14" height="8"/></svg>
<div class="a" style="left:954px;top:354px;width:208px;height:25px;background:#d3d3d3"></div>
<div class="t l m0" style="left:961px;top:359px;font-size:12.2px">Vytvořil:</div>
<div class="t r" style="left:1155px;top:359px;letter-spacing:-.45px">K2 <span class="l">10.01.2018 10:17:14</span></div>
<div class="u" style="top:375px"></div>

<div class="a" style="left:954px;top:385px;width:225px;height:25px;background:#0093cb"></div>
<div class="t b s" style="left:958px;top:391px">Nastavení</div>
<div class="a" style="left:1154px;top:387px;width:1px;height:21px;background:#0a7aa8"></div>
<svg style="left:1160px;top:394px;color:#dbe6ee" width="14" height="8"><use href="#chev" width="14" height="8"/></svg>
<div class="a" style="left:954px;top:410px;width:225px;height:343px;background:#d3d3d3;border-bottom:1px solid #8c8c8c"></div>

<div class="t l" style="left:968px;top:416px">Informační sklad</div>
<div class="t l" style="left:1078px;top:416px">Období</div>
<div class="f" style="left:961px;top:431px;width:103px">MAT</div>
<svg style="left:1047px;top:437px" width="12" height="10"><use href="#dd" width="12" height="10"/></svg>
<div class="a" style="left:1067px;top:429px;width:106px;height:27px;background:#d6d6bc;border:2px solid #ed1c24"></div>
<div class="t m0" style="left:1072px;top:435px;font-size:13.2px;width:76px;overflow:hidden">Listopad/2021</div>
<svg style="left:1155px;top:440px" width="11" height="7" stroke="#1c5a96" stroke-width="1.100"><path d="M1 1l4.500 4.500L10 1"/></svg>

<div class="t l" style="left:968px;top:460px">Zobrazit MJ</div>
<div class="f" style="left:961px;top:475px;width:103px;font-size:13.5px">impl. pro pro</div>
<svg style="left:1047px;top:481px" width="12" height="10"><use href="#dd" width="12" height="10"/></svg>

<div class="t l" style="left:968px;top:504px">Firma</div>
<div class="f" style="left:961px;top:519px;width:211px;font-size:12.4px">VITANA</div>
<svg style="left:1155px;top:525px" width="12" height="10"><use href="#dd" width="12" height="10"/></svg>

<div class="t l" style="left:968px;top:548px">Měna</div>
<div class="t l" style="left:1078px;top:548px">Cenová skupina</div>
<div class="f" style="left:961px;top:563px;width:103px"></div>
<svg style="left:1047px;top:569px" width="12" height="10"><use href="#dd" width="12" height="10"/></svg>
<div class="f" style="left:1070px;top:563px;width:102px">KAT</div>
<svg style="left:1155px;top:569px" width="12" height="10"><use href="#dd" width="12" height="10"/></svg>

<div class="t l" style="left:968px;top:592px">Typ plánu</div>
<div class="t l" style="left:1078px;top:592px">Nastavení pok...</div>
<div class="f" style="left:961px;top:607px;width:103px"></div>
<svg style="left:1047px;top:613px" width="12" height="10"><use href="#dd" width="12" height="10"/></svg>
<div class="f" style="left:1070px;top:607px;width:102px"></div>
<svg style="left:1136px;top:613px" width="11" height="11" stroke="#1c5a96"><circle cx="5.500" cy="5.500" r="2"/><circle cx="5.500" cy="5.500" r="4.300" stroke-width="1.500" stroke-dasharray="1.500 .8"/></svg>
<svg style="left:1155px;top:614px" width="12" height="10" stroke="#1c5a96"><path d="M0 .500h12M1 3l5 5 5-5z"/></svg>

<div class="t l" style="left:968px;top:636px">Jazyk pro zobrazení a edit...</div>
<div class="f" style="left:961px;top:651px;width:157px">implicitní</div>
<svg style="left:1101px;top:657px" width="12" height="10"><use href="#dd" width="12" height="10"/></svg>
<div class="a" style="left:1124px;top:651px;width:48px;height:23px;background:#bdbdbd;border:1px solid #8c8c8c;text-align:center;line-height:21px">Další...</div>

<div class="t l" style="left:968px;top:680px">Web pro zobrazení a editaci dat</div>
<div class="f" style="left:961px;top:695px;width:211px"></div>
<svg style="left:1155px;top:701px" width="12" height="10"><use href="#dd" width="12" height="10"/></svg>

<div class="a" style="left:962px;top:727px;width:17px;height:17px;background:#d6d6bc;border:1px solid #1c5a96"></div>
<div class="t l" style="left:985px;top:728px">Pouze zboží s dispozicí</div>
</body></html>
